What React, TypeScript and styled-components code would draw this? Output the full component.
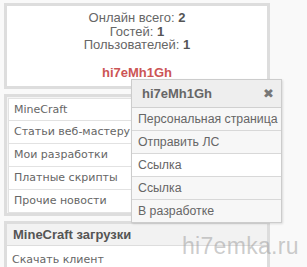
import React from "react";
import styled, { createGlobalStyle } from "styled-components";

const Global = createGlobalStyle`
  html, body { margin: 0; padding: 0; background: #f9f9f9; }
  body { font-family: "Liberation Sans", Arial, sans-serif; color: #666; }
`;

const Page = styled.div`
  position: relative;
  width: 307px;
  height: 267px;
  overflow: hidden;
  padding: 3px 0 0 4px;
  box-sizing: border-box;
`;

const Column = styled.div`
  width: 266px;
  display: flex;
  flex-direction: column;
  gap: 5px;
`;

const Block = styled.div`
  border: 3px solid #dddddd;
  background: #ffffff;
`;

const Stats = styled.div`
  height: 80px;
  box-sizing: border-box;
  padding-top: 5px;
  text-align: center;
  font-size: 13px;
  line-height: 13.5px;
  color: #666;
  b { font-weight: bold; color: #555; }
`;

const UserName = styled.div`
  margin-top: 14px;
  color: #cc5555;
  font-weight: bold;
  font-size: 13px;
`;

const MenuList = styled.div`
  display: flex;
  flex-direction: column;
  background: #f4f4f4;
  padding: 1px 1px 0 1px;
`;

const MenuItem = styled.div`
  height: 22px;
  line-height: 22px;
  border: 1px solid #e2e2e2;
  border-top: none;
  &:first-child { border-top: 1px solid #e2e2e2; height: 21px; }
  background: #ffffff;
  padding-left: 5px;
  font-family: "DejaVu Sans", Verdana, sans-serif;
  font-size: 11px;
  color: #666;
  white-space: nowrap;
`;

const BlockHeader = styled.div`
  height: 21px;
  line-height: 22px;
  background: #f2f2f2;
  border-bottom: 1px solid #dddddd;
  padding-left: 6px;
  font-size: 13px;
  font-weight: bold;
  color: #555;
`;

const BlockRow = styled.div`
  height: 22px;
  line-height: 28px;
  padding-left: 5px;
  font-family: "DejaVu Sans", Verdana, sans-serif;
  font-size: 11px;
  color: #666;
`;

const Popup = styled.div`
  position: absolute;
  left: 131px;
  top: 79px;
  width: 151px;
  box-sizing: border-box;
  border: 1px solid #cccccc;
  background: #f7f7f7;
  box-shadow: 1px 1px 2px rgba(0, 0, 0, 0.12);
`;

const PopupHead = styled.div`
  height: 27px;
  display: flex;
  align-items: center;
  justify-content: space-between;
  padding: 0 7px 0 10px;
  background: #eeeeee;
  border-bottom: 1px solid #d0d0d0;
  font-size: 13px;
  font-weight: bold;
  color: #666;
`;

const Close = styled.span`
  font-family: "DejaVu Sans", sans-serif;
  font-size: 13px;
  line-height: 1;
  color: #777;
`;

const PopupRow = styled.div<{ $active?: boolean }>`
  height: 22px;
  line-height: 23px;
  padding-left: 6px;
  border-bottom: 1px solid #d8d8d8;
  &:last-child { border-bottom: none; }
  background: ${(p) => (p.$active ? "#ffffff" : "#f7f7f7")};
  font-size: 12.3px;
  color: #666;
  white-space: nowrap;
`;

const Watermark = styled.div`
  position: absolute;
  left: 182px;
  top: 233px;
  font-family: "Liberation Sans", Arial, sans-serif;
  font-size: 23px;
  color: rgba(160, 160, 160, 0.55);
  letter-spacing: 0.3px;
`;

const menu = [
  "MineCraft",
  "Статьи веб-мастеру",
  "Мои разработки",
  "Платные скрипты",
  "Прочие новости",
];

const popupItems = [
  "Персональная страница",
  "Отправить ЛС",
  "Ссылка",
  "Ссылка",
  "В разработке",
];

export default function App() {
  return (
    <>
      <Global />
      <Page>
        <Column>
          <Block>
            <Stats>
              <div>
                Онлайн всего: <b>2</b>
              </div>
              <div>
                Гостей: <b>1</b>
              </div>
              <div>
                Пользователей: <b>1</b>
              </div>
              <UserName>hi7eMh1Gh</UserName>
            </Stats>
          </Block>
          <Block>
            <MenuList>
              {menu.map((m) => (
                <MenuItem key={m}>{m}</MenuItem>
              ))}
            </MenuList>
          </Block>
          <Block>
            <BlockHeader>MineCraft загрузки</BlockHeader>
            <BlockRow>Скачать клиент</BlockRow>
          </Block>
        </Column>
        <Popup>
          <PopupHead>
            <span>hi7eMh1Gh</span>
            <Close>✖</Close>
          </PopupHead>
          {popupItems.map((t, i) => (
            <PopupRow key={i} $active={i === 2}>
              {t}
            </PopupRow>
          ))}
        </Popup>
        <Watermark>hi7emka.ru</Watermark>
      </Page>
    </>
  );
}
